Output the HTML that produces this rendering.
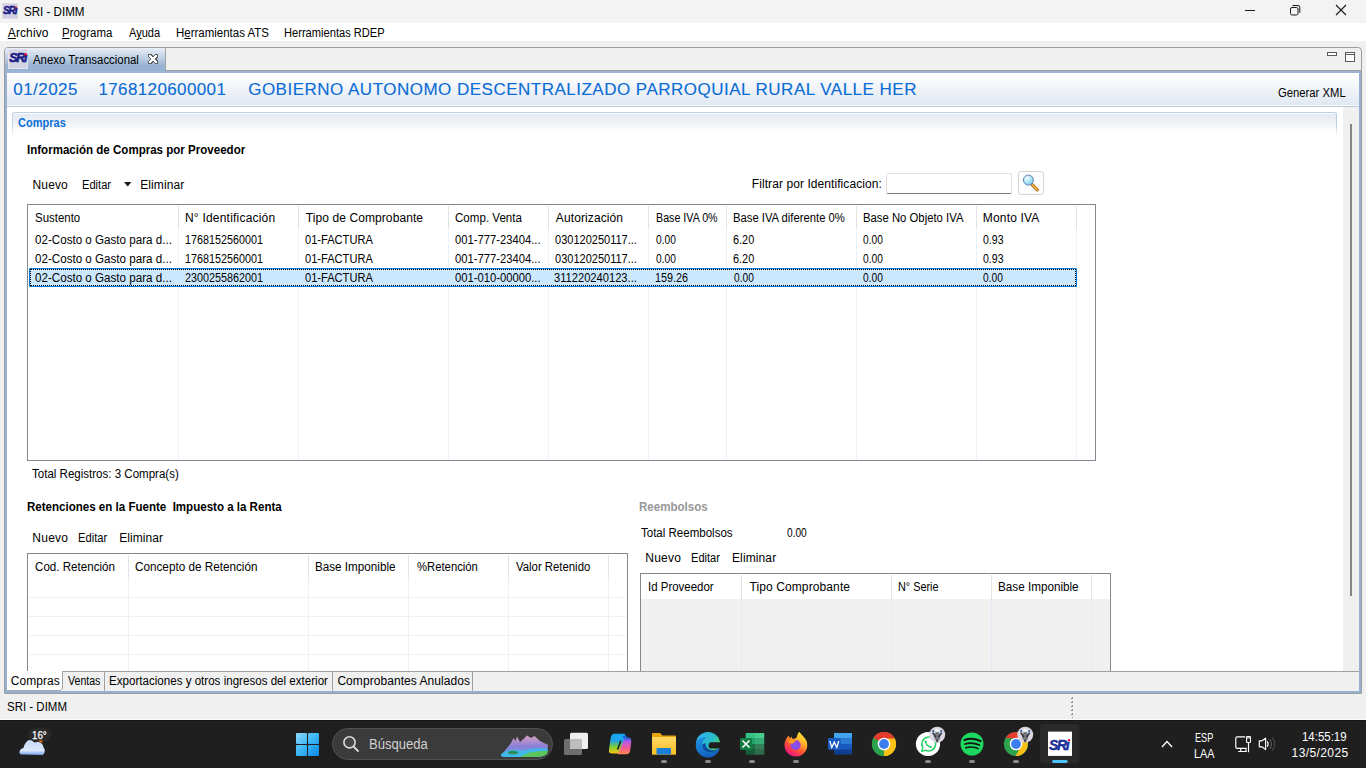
<!DOCTYPE html>
<html><head><meta charset="utf-8">
<style>
*{margin:0;padding:0;box-sizing:border-box}
html,body{width:1366px;height:768px;overflow:hidden;background:#f0f0f0;font-family:"Liberation Sans",sans-serif;font-size:12px;color:#000;position:relative}
.a{position:absolute}
.t{position:absolute;white-space:nowrap;line-height:12px;font-size:12px}
.t u{text-decoration:underline;text-underline-offset:1px}
.vs{position:absolute;width:1px}
</style></head><body>
<!-- title bar -->
<div class="a" style="left:0;top:0;width:1366px;height:23px;background:#f3f3f3"></div>
<svg class="a" style="left:2px;top:3px" width="16" height="16" viewBox="0 0 16 16">
 <rect x="0" y="0" width="16" height="16" fill="#dcdce8"/>
 <rect x="1" y="1" width="14" height="14" fill="#cfcfe1"/>
 <text x="1" y="11" font-family="Liberation Sans" font-weight="bold" font-style="italic" font-size="10" fill="#181c86" stroke="#181c86" stroke-width="0.45" letter-spacing="-1.05">SRı</text>
 <circle cx="14" cy="4.5" r="1" fill="#e8102a"/>
</svg>
<!-- window buttons -->
<div class="a" style="left:1245px;top:10px;width:10px;height:1px;background:#1a1a1a"></div>
<svg class="a" style="left:1289px;top:4px" width="13" height="13" viewBox="0 0 13 13">
 <rect x="1.5" y="3.5" width="7.5" height="7.5" rx="1.5" fill="none" stroke="#1a1a1a" stroke-width="1"/>
 <path d="M3.5 1.5 H9 A1.8 1.8 0 0 1 10.8 3.3 V8.8" fill="none" stroke="#1a1a1a" stroke-width="1"/>
</svg>
<svg class="a" style="left:1335px;top:4px" width="12" height="12" viewBox="0 0 12 12">
 <path d="M1 1 L11 11 M11 1 L1 11" stroke="#1a1a1a" stroke-width="1.1"/>
</svg>
<!-- menu bar -->
<div class="a" style="left:0;top:23px;width:1366px;height:18px;background:#fff"></div>

<!-- main frame outer gray -->
<div class="a" style="left:4px;top:47px;width:1358px;height:647px;border:1px solid #9c9c9c;border-radius:4px 4px 0 0;background:#f0f0f0"></div>
<!-- tab -->
<div class="a" style="left:5px;top:48px;width:161px;height:25px;background:linear-gradient(#e9eff7 0%,#b8cbe1 45%,#9ab4d3 68%,#95b0d0 100%);border-right:1px solid #a0a0a0;border-radius:3px 0 0 0"></div>
<svg class="a" style="left:8px;top:49px" width="20" height="20" viewBox="0 0 20 20">
 <rect x="0" y="0" width="20" height="20" fill="#e2e2ec"/>
 <rect x="1" y="1" width="18" height="18" fill="#d3d3e3"/>
 <text x="1.3" y="13.4" font-family="Liberation Sans" font-weight="bold" font-style="italic" font-size="12.5" fill="#181c86" stroke="#181c86" stroke-width="0.55" letter-spacing="-1.3">SRı</text>
 <circle cx="17.6" cy="5.4" r="1.3" fill="#e8102a"/>
</svg>
<svg class="a" style="left:148px;top:54px" width="10" height="10" viewBox="0 0 10 10" shape-rendering="crispEdges">
 <polygon points="0,0 3,0 5,2 7,0 10,0 10,3 8,5 10,7 10,10 7,10 5,8 3,10 0,10 0,7 2,5 0,3" fill="#5e5e5e"/>
 <polygon points="1,1 2.6,1 5,3.4 7.4,1 9,1 9,2.6 6.6,5 9,7.4 9,9 7.4,9 5,6.6 2.6,9 1,9 1,7.4 3.4,5 1,2.6" fill="#fff"/>
</svg>
<div class="a" style="left:166px;top:70px;width:1195px;height:1px;background:#a0a0a0"></div>
<!-- view min/max -->
<div class="a" style="left:1327px;top:52px;width:10px;height:4px;border:1px solid #5a5a5a;background:#fff"></div>
<div class="a" style="left:1345px;top:52px;width:10px;height:10px;border:1px solid #5a5a5a;background:#fff"></div><div class="a" style="left:1346px;top:54px;width:8px;height:1px;background:#5a5a5a"></div>
<!-- blue frame -->
<div class="a" style="left:5px;top:71px;width:1356px;height:622px;border:2px solid #95b1d3;background:#fff"></div>
<div class="a" style="left:7px;top:71px;width:158px;height:2px;background:#9db8d6"></div>
<!-- header -->
<div class="a" style="left:7px;top:73px;width:1352px;height:32px;background:linear-gradient(#ffffff,#e1e8f1)"></div><div class="a" style="left:7px;top:105px;width:1352px;height:1px;background:#fafbfd"></div>
<div class="a" style="left:7px;top:106px;width:1352px;height:1px;background:#b5c9dd"></div>

<!-- group box -->
<div class="a" style="left:12px;top:112px;width:1325px;height:24px;border:1px solid #bccfe2;border-bottom:none;border-radius:3px 3px 0 0;background:linear-gradient(#e3e9f1,#ffffff)"></div>
<div class="a" style="left:12px;top:124px;width:1325px;height:13px;background:linear-gradient(rgba(255,255,255,0),#fff)"></div><div class="a" style="left:14px;top:113px;width:1321px;height:1px;background:#fbfcfd"></div>

<!-- scrollbar -->
<div class="a" style="left:1343px;top:107px;width:16px;height:564px;background:#f0f0f0"></div>
<div class="a" style="left:1350px;top:124px;width:2px;height:472px;background:#858585"></div>

<!-- filter -->
<div class="a" style="left:886px;top:173px;width:126px;height:21px;border:1px solid #e3e3e3;border-bottom:1px solid #7a7a7a;border-radius:2px;background:#fff"></div>
<div class="a" style="left:1018px;top:171px;width:26px;height:24px;border:1px solid #d4d4d4;border-radius:3px;background:#fdfdfd"></div>
<svg class="a" style="left:1021px;top:174px" width="20" height="18" viewBox="0 0 20 18">
 <defs><radialGradient id="lg" cx="0.35" cy="0.3" r="0.75"><stop offset="0" stop-color="#f0fcff"/><stop offset="0.5" stop-color="#b4e8fa"/><stop offset="1" stop-color="#7ccaf0"/></radialGradient></defs>
 <line x1="11.3" y1="10.8" x2="16.3" y2="15.8" stroke="#9a5c0c" stroke-width="3.2" stroke-linecap="round"/>
 <line x1="11.3" y1="10.8" x2="16.3" y2="15.8" stroke="#f4b84a" stroke-width="1.7" stroke-linecap="round"/>
 <circle cx="7.4" cy="6.1" r="5" fill="url(#lg)" stroke="#5876a6" stroke-width="0.9"/>
</svg>
<!-- dropdown triangle -->
<svg class="a" style="left:124px;top:182px" width="8" height="5" viewBox="0 0 8 5"><path d="M0 0 H7.4 L3.7 4.4 Z" fill="#1a1a1a"/></svg>

<!-- table 1 -->
<div class="a" style="left:27px;top:204px;width:1069px;height:257px;border:1px solid #828790;background:#fff"></div>
<div class="vs" style="left:178px;top:206px;height:23px;background:#e3e3e3"></div>
<div class="vs" style="left:298px;top:206px;height:23px;background:#e3e3e3"></div>
<div class="vs" style="left:448px;top:206px;height:23px;background:#e3e3e3"></div>
<div class="vs" style="left:548px;top:206px;height:23px;background:#e3e3e3"></div>
<div class="vs" style="left:648px;top:206px;height:23px;background:#e3e3e3"></div>
<div class="vs" style="left:726px;top:206px;height:23px;background:#e3e3e3"></div>
<div class="vs" style="left:856px;top:206px;height:23px;background:#e3e3e3"></div>
<div class="vs" style="left:976px;top:206px;height:23px;background:#e3e3e3"></div>
<div class="vs" style="left:1076px;top:206px;height:23px;background:#e3e3e3"></div>
<div class="vs" style="left:178px;top:230px;height:230px;background:#eaf2fa"></div>
<div class="vs" style="left:298px;top:230px;height:230px;background:#eaf2fa"></div>
<div class="vs" style="left:448px;top:230px;height:230px;background:#eaf2fa"></div>
<div class="vs" style="left:548px;top:230px;height:230px;background:#eaf2fa"></div>
<div class="vs" style="left:648px;top:230px;height:230px;background:#eaf2fa"></div>
<div class="vs" style="left:726px;top:230px;height:230px;background:#eaf2fa"></div>
<div class="vs" style="left:856px;top:230px;height:230px;background:#eaf2fa"></div>
<div class="vs" style="left:976px;top:230px;height:230px;background:#eaf2fa"></div>
<div class="vs" style="left:1076px;top:230px;height:230px;background:#eaf2fa"></div>
<!-- selected row -->
<div class="a" style="left:29px;top:268px;width:1048px;height:19px;background:#cce8ff;border:1px solid #0078d7;border-radius:1px"></div>
<div class="a" style="left:30px;top:269px;width:1046px;height:17px;border:1px dotted #000"></div>

<!-- retenciones table -->
<div class="a" style="left:27px;top:553px;width:601px;height:125px;border:1px solid #828790;background:#fff"></div>
<div class="vs" style="left:128px;top:555px;height:23px;background:#e3e3e3"></div>
<div class="vs" style="left:308px;top:555px;height:23px;background:#e3e3e3"></div>
<div class="vs" style="left:408px;top:555px;height:23px;background:#e3e3e3"></div>
<div class="vs" style="left:508px;top:555px;height:23px;background:#e3e3e3"></div>
<div class="vs" style="left:608px;top:555px;height:23px;background:#e3e3e3"></div>
<div class="vs" style="left:128px;top:578px;height:93px;background:#eaf2fa"></div>
<div class="vs" style="left:308px;top:578px;height:93px;background:#eaf2fa"></div>
<div class="vs" style="left:408px;top:578px;height:93px;background:#eaf2fa"></div>
<div class="vs" style="left:508px;top:578px;height:93px;background:#eaf2fa"></div>
<div class="vs" style="left:608px;top:578px;height:93px;background:#eaf2fa"></div>
<div class="a" style="left:28px;top:597px;width:598px;height:1px;background:#f0f0f0"></div>
<div class="a" style="left:28px;top:616px;width:598px;height:1px;background:#f0f0f0"></div>
<div class="a" style="left:28px;top:635px;width:598px;height:1px;background:#f0f0f0"></div>
<div class="a" style="left:28px;top:654px;width:598px;height:1px;background:#f0f0f0"></div>

<!-- reembolsos table -->
<div class="a" style="left:640px;top:573px;width:471px;height:105px;border:1px solid #828790;background:#f0f0f0"></div>
<div class="a" style="left:641px;top:574px;width:469px;height:25px;background:#fff"></div>
<div class="vs" style="left:741px;top:575px;height:24px;background:#e3e3e3"></div>
<div class="vs" style="left:891px;top:575px;height:24px;background:#e3e3e3"></div>
<div class="vs" style="left:991px;top:575px;height:24px;background:#e3e3e3"></div>
<div class="vs" style="left:1091px;top:575px;height:24px;background:#e3e3e3"></div>
<div class="vs" style="left:741px;top:599px;height:72px;background:#e3eaf3"></div>
<div class="vs" style="left:891px;top:599px;height:72px;background:#e3eaf3"></div>
<div class="vs" style="left:991px;top:599px;height:72px;background:#e3eaf3"></div>
<div class="vs" style="left:1091px;top:599px;height:72px;background:#e3eaf3"></div>

<!-- bottom tab bar -->
<div class="a" style="left:7px;top:671px;width:1352px;height:20px;background:#f0f0f0;border-top:1px solid #a0a0a0"></div>
<div class="a" style="left:7px;top:671px;width:55px;height:20px;background:#fff"></div>
<div class="vs" style="left:62px;top:671px;height:18px;background:#a0a0a0"></div><div class="a" style="left:7px;top:690px;width:54px;height:1px;background:#a8a8a8"></div><div class="a" style="left:61px;top:689px;width:1px;height:1px;background:#a8a8a8"></div>
<div class="vs" style="left:104px;top:672px;height:19px;background:#a0a0a0"></div>
<div class="vs" style="left:332px;top:672px;height:19px;background:#a0a0a0"></div>
<div class="vs" style="left:472px;top:672px;height:19px;background:#a0a0a0"></div>

<!-- status bar -->
<svg class="a" style="left:1071px;top:696px" width="3" height="23" shape-rendering="crispEdges"><rect x="1" y="1" width="1" height="1" fill="#a0a0a0"/><rect x="0" y="2" width="2" height="1" fill="#8a8a8a"/><rect x="1" y="5" width="1" height="1" fill="#a0a0a0"/><rect x="0" y="6" width="2" height="1" fill="#8a8a8a"/><rect x="1" y="9" width="1" height="1" fill="#a0a0a0"/><rect x="0" y="10" width="2" height="1" fill="#8a8a8a"/><rect x="1" y="13" width="1" height="1" fill="#a0a0a0"/><rect x="0" y="14" width="2" height="1" fill="#8a8a8a"/><rect x="1" y="17" width="1" height="1" fill="#a0a0a0"/><rect x="0" y="18" width="2" height="1" fill="#8a8a8a"/><rect x="1" y="21" width="1" height="1" fill="#9a9a9a"/></svg>
<div class="a" style="left:0;top:719px;width:1366px;height:1px;background:#fafafa"></div>

<!-- taskbar -->
<div class="a" style="left:0;top:720px;width:1366px;height:48px;background:#1f1f1f;border-top:1px solid #171717"></div>
<svg class="a" style="left:0;top:720px" width="1366" height="48" viewBox="0 720 1366 48">
 <defs>
  <linearGradient id="cloud" x1="0" y1="0" x2="0" y2="1"><stop offset="0" stop-color="#c4dcfb"/><stop offset="0.7" stop-color="#dbe8fa"/><stop offset="1" stop-color="#6f9ee8"/></linearGradient>
  <linearGradient id="win" gradientUnits="userSpaceOnUse" x1="296" y1="733" x2="319" y2="756"><stop offset="0" stop-color="#8ad8fa"/><stop offset="0.5" stop-color="#3cb6f6"/><stop offset="1" stop-color="#0a86ea"/></linearGradient>
  <linearGradient id="fold" x1="0" y1="0" x2="0" y2="1"><stop offset="0" stop-color="#ffd866"/><stop offset="1" stop-color="#f8bd22"/></linearGradient>
  <linearGradient id="edge1" x1="0.1" y1="0.1" x2="1" y2="0.7"><stop offset="0" stop-color="#35b3ea"/><stop offset="0.55" stop-color="#27bcc8"/><stop offset="1" stop-color="#62dc58"/></linearGradient>
  <linearGradient id="edge2" x1="0" y1="0" x2="0.3" y2="1"><stop offset="0" stop-color="#1f94e6"/><stop offset="1" stop-color="#1262c2"/></linearGradient>
  <radialGradient id="ff" cx="0.55" cy="0.25" r="0.85"><stop offset="0" stop-color="#fff44f"/><stop offset="0.45" stop-color="#ff9a23"/><stop offset="0.8" stop-color="#ff3d5a"/><stop offset="1" stop-color="#e31587"/></radialGradient>
  <radialGradient id="ffp" cx="0.45" cy="0.6" r="0.6"><stop offset="0" stop-color="#7b5cf0"/><stop offset="1" stop-color="#9b3fe0"/></radialGradient><linearGradient id="ffb" x1="0.85" y1="0" x2="0.25" y2="1"><stop offset="0" stop-color="#fff04a"/><stop offset="0.35" stop-color="#ffb428"/><stop offset="0.62" stop-color="#ff5b30"/><stop offset="0.88" stop-color="#f2236c"/><stop offset="1" stop-color="#dc1a8a"/></linearGradient>
  <linearGradient id="cop1" x1="0" y1="0" x2="0" y2="1"><stop offset="0" stop-color="#14a8f8"/><stop offset="0.35" stop-color="#1fa2e8"/><stop offset="0.65" stop-color="#7ccb3a"/><stop offset="1" stop-color="#f7c70e"/></linearGradient>
  <linearGradient id="cop2" x1="0" y1="0" x2="0" y2="1"><stop offset="0" stop-color="#1d5fd8"/><stop offset="0.25" stop-color="#b55de8"/><stop offset="0.6" stop-color="#f2559a"/><stop offset="1" stop-color="#ff8a4a"/></linearGradient>
  <linearGradient id="land" x1="0" y1="0" x2="0" y2="1"><stop offset="0" stop-color="#d9a0c0"/><stop offset="0.5" stop-color="#8c7fd8"/><stop offset="1" stop-color="#5aa8e8"/></linearGradient>
  <radialGradient id="badge" cx="0.5" cy="0.5" r="0.5"><stop offset="0" stop-color="#5a5a5a"/><stop offset="0.6" stop-color="#9a9aa2"/><stop offset="1" stop-color="#d8d8e0"/></radialGradient>
 </defs>
 <!-- weather -->
 <ellipse cx="39.8" cy="734.8" rx="11.8" ry="7.5" fill="#2a2a2a"/>
 <path d="M38 740.5 L42.5 740.5 L42 743 Z" fill="#f07a10"/>
 <path d="M21 754.5 C18.5 754 19 748.5 23.5 748 C24.5 743.5 27.5 740 30 740 C32 740 33 741.5 34.5 742.5 C38 741 43 742.5 43.5 747.5 C45.5 749 45 754.5 42.5 755 Z" fill="url(#cloud)"/>
 <!-- windows logo -->
 <rect x="296" y="733" width="11" height="11" rx="1" fill="url(#win)"/>
 <rect x="308" y="733" width="11" height="11" rx="1" fill="url(#win)"/>
 <rect x="296" y="745" width="11" height="11" rx="1" fill="url(#win)"/>
 <rect x="308" y="745" width="11" height="11" rx="1" fill="url(#win)"/>
 <!-- search pill -->
 <rect x="332.5" y="728.5" width="220" height="31" rx="15.5" fill="#3b3b3b" stroke="#525252" stroke-width="1"/>
 <circle cx="349.5" cy="742.3" r="5.6" fill="#454545" stroke="#dadada" stroke-width="1.6"/>
 <path d="M353.5 746.5 L358 751" stroke="#d8d8d8" stroke-width="1.8" stroke-linecap="round"/>
 <!-- landscape -->
 <path d="M503 753 L511 743 L513.5 738 L515.5 741 L517 736.5 L520 742 L524 738.5 L527 735.5 L531 738 L534.5 736 L540 741 L548 745 L547 753 Q544 757 536 757 L505 757 Z" fill="url(#land)"/>
 <path d="M501 754 Q510 748 522 751 Q536 747 548 749 L547 753 Q544 757 536 757 L505 757 Q500 757 501 754 Z" fill="#3fb8e8"/>
 <path d="M520 757 Q530 750 548 751 L547 754 Q544 757 536 757 Z" fill="#5cc45a"/>
 <ellipse cx="513" cy="752.5" rx="5" ry="1.8" fill="#2a8a5a"/>
 <!-- task view -->
 <rect x="564" y="739" width="18" height="16" rx="1.5" fill="#6e6e6e"/>
 <rect x="570" y="732.8" width="18" height="16.2" rx="1.5" fill="#eeeeee"/>
 <rect x="570" y="739" width="12" height="10" rx="1" fill="#bdbdbd"/>
 <!-- copilot -->
 <path d="M620 737.5 H628 Q631.6 737.5 631.3 741 L630.2 750.5 Q629.8 754.3 626.2 754.3 H618.5 Q615.8 754.3 616.6 751.6 Z" fill="url(#cop2)"/>
 <path d="M614.5 733.8 H623 Q626.2 733.8 625.2 736.8 L619.3 751 Q618.3 753.5 615.6 753.5 H612 Q608.6 753.5 608.9 750.2 L610.6 738.4 Q611.2 733.8 614.5 733.8 Z" fill="url(#cop1)"/>
 <path d="M623.5 736 L626 736 L628.5 738 L622.5 738 Z" fill="#1d5fd8"/>
 <path d="M620.8 740.8 L617.6 749.6" stroke="#1f1f1f" stroke-width="1.6"/>
 <!-- file explorer -->
 <path d="M652 734 Q652 733 653 733 L660 733 L662.5 735.5 L675 735.5 Q676 735.5 676 736.5 L676 754.5 L652 754.5 Z" fill="#e9a30d"/>
 <rect x="652" y="737" width="24" height="17.5" rx="0.8" fill="url(#fold)"/>
 <rect x="656.5" y="748" width="14.5" height="6.5" rx="1.2" fill="#1a7fd8"/>
 <rect x="661" y="760" width="6" height="3" rx="1.5" fill="#8a8a8a"/>
 <!-- edge -->
 <circle cx="708" cy="744" r="12.1" fill="url(#edge1)"/>
 <path d="M711.5 742.3 H721 V748.6 H711.5 Q708.6 748.6 708.6 745.4 Q708.6 742.3 711.5 742.3 Z" fill="#1f1f1f"/>
 <path d="M695.9 744 A12.1 12.1 0 0 0 719.6 748.6 L718.3 748.6 Q714 753.3 708.3 752.3 Q702.3 751 702.3 744.3 Q702.3 738.6 708 737.4 Q701.5 736.4 697.3 740.3 Q695.9 742 695.9 744 Z" fill="url(#edge2)"/>
 <path d="M702.3 744.3 Q702.3 751 708.3 752.3 Q714 753.3 718.3 748.6 Q713 751.3 709 749.3 Q705.3 747.3 705.6 743 Z" fill="#0b4c9e"/>
 <rect x="705" y="760" width="6" height="3" rx="1.5" fill="#8a8a8a"/>
 <!-- excel -->
 <rect x="745.8" y="733" width="18.4" height="21.5" rx="1" fill="#1e7145"/>
 <rect x="745.8" y="733" width="18.4" height="5.5" fill="#33c481"/>
 <rect x="745.8" y="738.5" width="18.4" height="5.5" fill="#21a366"/>
 <rect x="745.8" y="749" width="18.4" height="5.5" fill="#185c37"/>
 <rect x="755" y="733" width="9.2" height="21.5" fill="#ffffff" fill-opacity="0.10"/>
 <rect x="740" y="738" width="12" height="12" rx="1" fill="#107c41"/>
 <path d="M742.5 740.5 L749.5 747.5 M749.5 740.5 L742.5 747.5" stroke="#fff" stroke-width="1.6"/>
 <rect x="749" y="760" width="6" height="3" rx="1.5" fill="#8a8a8a"/>
 <!-- firefox -->
 <path d="M788.6 735.8 L790.2 738.6 L791.6 736.6 L792.8 739.2 Q794.5 738 796.3 737.9 Q797.2 734.2 799.2 731.8 Q801.3 734.6 803.4 736.6 Q807.2 740.3 807.2 745.2 A11.3 11.3 0 0 1 784.5 745.3 Q784.5 739.8 788.6 735.8 Z" fill="url(#ffb)"/>
 <circle cx="795.6" cy="745" r="5.1" fill="url(#ffp)"/>
 <path d="M787.8 741.3 Q791.5 739.2 796.8 740.8 Q793.6 741.8 793 743.6 Q790.4 744.2 787.8 741.3 Z" fill="#ffa21e"/>
 <rect x="793" y="760" width="6" height="3" rx="1.5" fill="#8a8a8a"/>
 <!-- word -->
 <rect x="834" y="733" width="18" height="21.5" rx="1" fill="#103f91"/>
 <rect x="834" y="733" width="18" height="5.5" fill="#41a5ee"/>
 <rect x="834" y="738.5" width="18" height="5.5" fill="#2b7cd3"/>
 <rect x="834" y="744" width="18" height="5.5" fill="#185abd"/>
 <rect x="828" y="738" width="12.7" height="11.8" rx="1" fill="#185abd"/>
 <path d="M829.8 741 L831.8 747.5 L834.3 742 L836.8 747.5 L838.8 741" stroke="#fff" stroke-width="1.3" fill="none"/>
 <!-- chrome 1 -->
 <g transform="translate(884 744)">
  <circle r="12.1" fill="#2ca24f"/>
  <path d="M0 0 L-10.5 -6 A12.1 12.1 0 0 1 10.5 -6 Z" fill="#e33b2e"/>
  <path d="M0 0 L10.5 -6 A12.1 12.1 0 0 1 0 12.1 Z" fill="#fbc116"/>
  <path d="M0 0 L-10.5 -6 L-10.5 -6 A12.1 12.1 0 0 0 0 12.1 L0 12.1 Z" fill="#2ca24f"/>
  <path d="M0 -5.5 L10.5 -5.5 L10.5 -6 A12.1 12.1 0 0 0 -10.5 -6 Z" fill="#e33b2e"/>
  <path d="M4.8 2.8 L-0.5 12.1 A12.1 12.1 0 0 0 10.5 -5.5 L0 -5.5 Z" fill="#fbc116"/>
  <circle r="6.3" fill="#fff"/>
  <circle r="4.9" fill="#3b7ded"/>
 </g>
 <!-- whatsapp -->
 <circle cx="928" cy="744" r="12.1" fill="#fff"/>
 <path d="M921.7 751.2 L922.8 747.6 A6.9 6.9 0 1 1 925.6 750.2 Z" fill="none" stroke="#27d367" stroke-width="1.5" stroke-linejoin="round"/>
 <path d="M925.6 741.6 Q926 745.6 930.6 747" stroke="#27d367" stroke-width="1.3" fill="none" stroke-linecap="round"/>
 <circle cx="925.7" cy="741.6" r="1.15" fill="#27d367"/>
 <circle cx="930.6" cy="746.9" r="1.15" fill="#27d367"/>
 <circle cx="937.2" cy="734.7" r="8" fill="#d9d6e2"/>
 <ellipse cx="937.2" cy="736.2" rx="3" ry="4.2" fill="#74747c"/>
 <path d="M932.7 732.7 L935.7 737.2 M941.7 732.7 L938.7 737.2" stroke="#2e2e36" stroke-width="1.5"/>
 <circle cx="933.2" cy="731.1" r="1.1" fill="#2f62a8"/>
 <circle cx="941.2" cy="731.1" r="1.1" fill="#2f62a8"/>
 <ellipse cx="937.2" cy="730.2" rx="2.5" ry="1.3" fill="#f4f2f6"/>
 <path d="M936.0 739.7 L938.4000000000001 739.7 L938.0 742.2 L936.4000000000001 742.2 Z" fill="#3a3a40"/>
 <rect x="925" y="760" width="6" height="3" rx="1.5" fill="#8a8a8a"/>
 <!-- spotify -->
 <circle cx="972" cy="744" r="11.5" fill="#1ed760"/>
 <path d="M964.5 740 Q972 737.3 980.5 741" stroke="#111" stroke-width="2" fill="none" stroke-linecap="round"/>
 <path d="M965 744 Q972 741.8 979.3 745" stroke="#111" stroke-width="1.8" fill="none" stroke-linecap="round"/>
 <path d="M965.8 747.7 Q972 746 978 748.5" stroke="#111" stroke-width="1.5" fill="none" stroke-linecap="round"/>
 <rect x="969" y="760" width="6" height="3" rx="1.5" fill="#8a8a8a"/>
 <!-- chrome 2 -->
 <g transform="translate(1016 744)">
  <circle r="12.1" fill="#2ca24f"/>
  <path d="M0 -5.5 L10.5 -5.5 L10.5 -6 A12.1 12.1 0 0 0 -10.5 -6 Z" fill="#e33b2e"/>
  <path d="M4.8 2.8 L-0.5 12.1 A12.1 12.1 0 0 0 10.5 -5.5 L0 -5.5 Z" fill="#fbc116"/>
  <circle r="6.3" fill="#fff"/>
  <circle r="4.9" fill="#3b7ded"/>
 </g>
 <circle cx="1025.2" cy="734.7" r="8" fill="#d9d6e2"/>
 <ellipse cx="1025.2" cy="736.2" rx="3" ry="4.2" fill="#74747c"/>
 <path d="M1020.7 732.7 L1023.7 737.2 M1029.7 732.7 L1026.7 737.2" stroke="#2e2e36" stroke-width="1.5"/>
 <circle cx="1021.2" cy="731.1" r="1.1" fill="#2f62a8"/>
 <circle cx="1029.2" cy="731.1" r="1.1" fill="#2f62a8"/>
 <ellipse cx="1025.2" cy="730.2" rx="2.5" ry="1.3" fill="#f4f2f6"/>
 <path d="M1024.0 739.7 L1026.4 739.7 L1026.0 742.2 L1024.4 742.2 Z" fill="#3a3a40"/>
 <rect x="1013" y="760" width="6" height="3" rx="1.5" fill="#8a8a8a"/>
 <!-- SRI active -->
 <rect x="1040" y="724" width="39.6" height="39.5" rx="4" fill="#2a2a2a"/>
 <rect x="1048" y="731.6" width="24" height="24.3" fill="#fff"/>
 <text x="1049" y="749.7" font-family="Liberation Sans" font-weight="bold" font-style="italic" font-size="14" fill="#1a2f9a" stroke="#1a2f9a" stroke-width="0.5" letter-spacing="-1.4">SRı</text>
 <circle cx="1069" cy="740.3" r="1.2" fill="#e8102a"/>
 <rect x="1052" y="760" width="15.7" height="3" rx="1.5" fill="#4cc2ff"/>
 <!-- tray -->
 <path d="M1162 747 L1167 741.5 L1172 747" stroke="#fff" stroke-width="1.3" fill="none"/>
 <!-- network -->
 <path d="M1245.2 736.8 H1237.2 Q1235.8 736.8 1235.8 738.2 V747 Q1235.8 748.4 1237.2 748.4 H1246.6" stroke="#fff" stroke-width="1.15" fill="none"/>
 <path d="M1240.7 748.4 V751.4 M1246 748.4 V751.4 M1238.2 751.5 H1246.8" stroke="#fff" stroke-width="1.1" fill="none"/>
 <rect x="1246.6" y="736.6" width="3.9" height="5.9" rx="0.8" stroke="#fff" stroke-width="1.1" fill="none"/>
 <path d="M1246.8 737.9 H1250.4" stroke="#fff" stroke-width="0.9"/>
 <path d="M1248.5 742.5 V752.2" stroke="#fff" stroke-width="1.15"/>
 <!-- volume -->
 <path d="M1259.3 740.8 H1262 L1265.6 738.2 V749.6 L1262 746.8 H1259.3 Z" stroke="#fff" stroke-width="1.15" fill="none" stroke-linejoin="round"/>
 <path d="M1267.2 741.3 Q1269.2 743.9 1267.2 746.8" stroke="#fff" stroke-width="1.1" fill="none"/>
 <path d="M1269.8 739.3 Q1273.3 743.9 1269.8 748.8" stroke="#5a5a5a" stroke-width="1.1" fill="none"/>
 <path d="M1272.4 737.6 Q1277 743.9 1272.4 750.6" stroke="#4a4a4a" stroke-width="1.1" fill="none"/>
</svg>


<div class="t" style="left:23.83px;top:6px;transform:scaleX(0.9656);transform-origin:0 0">SRI - DIMM</div>
<div class="t" style="left:7.80px;top:27px;letter-spacing:0.100px"><u>A</u>rchivo</div>
<div class="t" style="left:62.04px;top:27px;transform:scaleX(0.9558);transform-origin:0 0"><u>P</u>rograma</div>
<div class="t" style="left:129.40px;top:27px;transform:scaleX(0.9206);transform-origin:0 0">A<u>y</u>uda</div>
<div class="t" style="left:176.24px;top:27px;transform:scaleX(0.9562);transform-origin:0 0">H<u>e</u>rramientas ATS</div>
<div class="t" style="left:284.37px;top:27px;transform:scaleX(0.9262);transform-origin:0 0">Herramientas RDEP</div>
<div class="t" style="left:33.10px;top:54px;transform:scaleX(0.9505);transform-origin:0 0">Anexo Transaccional</div>
<div class="t" style="left:13.30px;top:81px;font-size:17px;line-height:17px;color:#0a6cd6;-webkit-text-stroke:0.12px #0a6cd6;letter-spacing:0.450px">01/2025</div>
<div class="t" style="left:98.40px;top:81px;font-size:17px;line-height:17px;color:#0a6cd6;-webkit-text-stroke:0.12px #0a6cd6;letter-spacing:0.383px">1768120600001</div>
<div class="t" style="left:248.20px;top:81px;font-size:17px;line-height:17px;color:#0a6cd6;-webkit-text-stroke:0.12px #0a6cd6;letter-spacing:0.493px">GOBIERNO AUTONOMO DESCENTRALIZADO PARROQUIAL RURAL VALLE HER</div>
<div class="t" style="left:1277.86px;top:87px;transform:scaleX(0.9394);transform-origin:0 0">Generar XML</div>
<div class="t" style="left:18.40px;top:117px;font-weight:700;color:#0b6fd8;transform:scaleX(0.9192);transform-origin:0 0">Compras</div>
<div class="t" style="left:27.24px;top:144px;font-weight:700;transform:scaleX(0.9624);transform-origin:0 0">Información de Compras por Proveedor</div>
<div class="t" style="left:32.50px;top:179px;letter-spacing:0.150px">Nuevo</div>
<div class="t" style="left:82.37px;top:179px;transform:scaleX(0.9267);transform-origin:0 0">Editar</div>
<div class="t" style="left:140.30px;top:179px;letter-spacing:0.071px">Eliminar</div>
<div class="t" style="left:751.80px;top:178px;letter-spacing:0.077px">Filtrar por Identificacion:</div>
<div class="t" style="left:34.75px;top:212px;transform:scaleX(0.9543);transform-origin:0 0">Sustento</div>
<div class="t" style="left:185.00px;top:212px;letter-spacing:0.206px">N° Identificación</div>
<div class="t" style="left:305.80px;top:212px;letter-spacing:0.089px">Tipo de Comprobante</div>
<div class="t" style="left:455.04px;top:212px;transform:scaleX(0.9647);transform-origin:0 0">Comp. Venta</div>
<div class="t" style="left:555.80px;top:212px;letter-spacing:0.109px">Autorización</div>
<div class="t" style="left:655.71px;top:212px;transform:scaleX(0.8912);transform-origin:0 0">Base IVA 0%</div>
<div class="t" style="left:733.26px;top:212px;transform:scaleX(0.9381);transform-origin:0 0">Base IVA diferente 0%</div>
<div class="t" style="left:862.96px;top:212px;transform:scaleX(0.9434);transform-origin:0 0">Base No Objeto IVA</div>
<div class="t" style="left:982.80px;top:212px;letter-spacing:0.175px">Monto IVA</div>
<div class="t" style="left:35.20px;top:234px;transform:scaleX(0.9679);transform-origin:0 0">02-Costo o Gasto para d...</div>
<div class="t" style="left:184.50px;top:234px;transform:scaleX(0.8976);transform-origin:0 0">1768152560001</div>
<div class="t" style="left:305.20px;top:234px;transform:scaleX(0.9247);transform-origin:0 0">01-FACTURA</div>
<div class="t" style="left:455.40px;top:234px;transform:scaleX(0.9356);transform-origin:0 0">001-777-23404...</div>
<div class="t" style="left:555.20px;top:234px;transform:scaleX(0.9182);transform-origin:0 0">030120250117...</div>
<div class="t" style="left:656.00px;top:234px;transform:scaleX(0.8478);transform-origin:0 0">0.00</div>
<div class="t" style="left:732.69px;top:234px;transform:scaleX(0.9091);transform-origin:0 0">6.20</div>
<div class="t" style="left:863.30px;top:234px;transform:scaleX(0.8478);transform-origin:0 0">0.00</div>
<div class="t" style="left:983.20px;top:234px;transform:scaleX(0.8783);transform-origin:0 0">0.93</div>
<div class="t" style="left:35.20px;top:253px;transform:scaleX(0.9679);transform-origin:0 0">02-Costo o Gasto para d...</div>
<div class="t" style="left:184.50px;top:253px;transform:scaleX(0.8976);transform-origin:0 0">1768152560001</div>
<div class="t" style="left:305.20px;top:253px;transform:scaleX(0.9247);transform-origin:0 0">01-FACTURA</div>
<div class="t" style="left:455.40px;top:253px;transform:scaleX(0.9356);transform-origin:0 0">001-777-23404...</div>
<div class="t" style="left:555.20px;top:253px;transform:scaleX(0.9182);transform-origin:0 0">030120250117...</div>
<div class="t" style="left:656.00px;top:253px;transform:scaleX(0.8478);transform-origin:0 0">0.00</div>
<div class="t" style="left:732.69px;top:253px;transform:scaleX(0.9091);transform-origin:0 0">6.20</div>
<div class="t" style="left:863.30px;top:253px;transform:scaleX(0.8478);transform-origin:0 0">0.00</div>
<div class="t" style="left:983.20px;top:253px;transform:scaleX(0.8783);transform-origin:0 0">0.93</div>
<div class="t" style="left:35.20px;top:272px;transform:scaleX(0.9679);transform-origin:0 0">02-Costo o Gasto para d...</div>
<div class="t" style="left:184.50px;top:272px;transform:scaleX(0.8976);transform-origin:0 0">2300255862001</div>
<div class="t" style="left:305.20px;top:272px;transform:scaleX(0.9247);transform-origin:0 0">01-FACTURA</div>
<div class="t" style="left:455.40px;top:272px;transform:scaleX(0.9356);transform-origin:0 0">001-010-00000...</div>
<div class="t" style="left:554.27px;top:272px;transform:scaleX(0.9287);transform-origin:0 0">311220240123...</div>
<div class="t" style="left:655.10px;top:272px;transform:scaleX(0.8971);transform-origin:0 0">159.26</div>
<div class="t" style="left:733.60px;top:272px;transform:scaleX(0.8478);transform-origin:0 0">0.00</div>
<div class="t" style="left:863.30px;top:272px;transform:scaleX(0.8478);transform-origin:0 0">0.00</div>
<div class="t" style="left:983.20px;top:272px;transform:scaleX(0.8478);transform-origin:0 0">0.00</div>
<div class="t" style="left:32.30px;top:468px;transform:scaleX(0.9612);transform-origin:0 0">Total Registros: 3 Compra(s)</div>
<div class="t" style="left:27.24px;top:501px;font-weight:700;transform:scaleX(0.9621);transform-origin:0 0">Retenciones en la Fuente&nbsp; Impuesto a la Renta</div>
<div class="t" style="left:32.30px;top:532px;letter-spacing:0.250px">Nuevo</div>
<div class="t" style="left:78.27px;top:532px;transform:scaleX(0.9333);transform-origin:0 0">Editar</div>
<div class="t" style="left:119.30px;top:532px;letter-spacing:0.043px">Eliminar</div>
<div class="t" style="left:35.13px;top:561px;transform:scaleX(0.9667);transform-origin:0 0">Cod. Retención</div>
<div class="t" style="left:135.32px;top:561px;transform:scaleX(0.9766);transform-origin:0 0">Concepto de Retención</div>
<div class="t" style="left:315.23px;top:561px;transform:scaleX(0.9728);transform-origin:0 0">Base Imponible</div>
<div class="t" style="left:416.50px;top:561px;transform:scaleX(0.9406);transform-origin:0 0">%Retención</div>
<div class="t" style="left:516.10px;top:561px;transform:scaleX(0.9462);transform-origin:0 0">Valor Retenido</div>
<div class="t" style="left:638.64px;top:501px;font-weight:700;color:#979797;transform:scaleX(0.9629);transform-origin:0 0">Reembolsos</div>
<div class="t" style="left:641.00px;top:527px;transform:scaleX(0.9600);transform-origin:0 0">Total Reembolsos</div>
<div class="t" style="left:786.80px;top:527px;transform:scaleX(0.8435);transform-origin:0 0">0.00</div>
<div class="t" style="left:645.20px;top:552px;letter-spacing:0.275px">Nuevo</div>
<div class="t" style="left:691.38px;top:552px;transform:scaleX(0.9233);transform-origin:0 0">Editar</div>
<div class="t" style="left:732.00px;top:552px;letter-spacing:0.114px">Eliminar</div>
<div class="t" style="left:648.14px;top:581px;transform:scaleX(0.9559);transform-origin:0 0">Id Proveedor</div>
<div class="t" style="left:749.40px;top:581px;letter-spacing:0.113px">Tipo Comprobante</div>
<div class="t" style="left:898.30px;top:581px;transform:scaleX(0.9045);transform-origin:0 0">N° Serie</div>
<div class="t" style="left:998.13px;top:581px;transform:scaleX(0.9741);transform-origin:0 0">Base Imponible</div>
<div class="t" style="left:10.80px;top:675px;letter-spacing:0.033px">Compras</div>
<div class="t" style="left:68.10px;top:675px;transform:scaleX(0.8833);transform-origin:0 0">Ventas</div>
<div class="t" style="left:108.83px;top:675px;transform:scaleX(0.9655);transform-origin:0 0">Exportaciones y otros ingresos del exterior</div>
<div class="t" style="left:337.40px;top:675px;letter-spacing:0.060px">Comprobantes Anulados</div>
<div class="t" style="left:6.84px;top:701px;transform:scaleX(0.9574);transform-origin:0 0">SRI - DIMM</div>
<div class="t" style="left:369.47px;top:737px;font-size:14px;line-height:14px;color:#cfcfcf;transform:scaleX(0.9306);transform-origin:0 0">Búsqueda</div>
<div class="t" style="left:32.31px;top:730px;font-size:11px;line-height:11px;color:#fff;-webkit-text-stroke:0.25px #fff;transform:scaleX(0.8867);transform-origin:0 0">16°</div>
<div class="t" style="left:1195.44px;top:732px;color:#fff;transform:scaleX(0.7609);transform-origin:0 0">ESP</div>
<div class="t" style="left:1194.40px;top:748px;color:#fff;transform:scaleX(0.9000);transform-origin:0 0">LAA</div>
<div class="t" style="left:1302.35px;top:731px;color:#fff;transform:scaleX(0.9533);transform-origin:0 0">14:55:19</div>
<div class="t" style="left:1291.60px;top:747px;color:#fff;letter-spacing:0.400px">13/5/2025</div>
</body></html>
